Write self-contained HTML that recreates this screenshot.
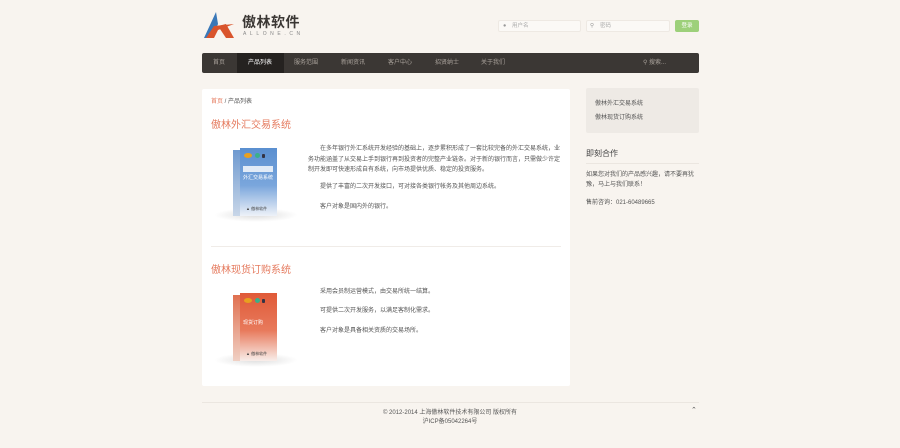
<!DOCTYPE html>
<html><head><meta charset="utf-8"><style>
*{margin:0;padding:0;box-sizing:border-box}
body{width:900px;height:448px;background:#f8f4ef;font-family:"Liberation Sans","Noto Sans CJK SC",sans-serif;color:#555;position:relative;overflow:hidden}
.a{position:absolute}
.t{font-size:6px;line-height:10.5px;color:#555;white-space:nowrap}
.nav{left:202px;top:53px;width:497px;height:20px;background:#3b3734;border-radius:2px}
.nav span{position:absolute;top:0;line-height:20px;font-size:6px;color:#a9a29b}
.inp{height:12px;background:#fbf9f6;border:1px solid #eee9e3;border-radius:2px;font-size:5.5px;color:#aaa;line-height:10px;padding-left:13px}
.dot{position:absolute;width:5px;height:5px;border-radius:50%}
</style></head><body>
<svg class="a" style="left:204px;top:12px" width="36" height="26" viewBox="0 0 36 26">
<polygon points="12,0 0,26 8,26 14,12" fill="#3a78b8"/>
<polygon points="2,26 10,14 30,12 14,18 10,26" fill="#d9542c"/>
<polygon points="14,14 22,26 30,26 22,12" fill="#d9542c"/>
</svg>
<div class="a" style="left:242px;top:14px;font-size:14px;font-weight:bold;color:#3b3734;letter-spacing:0.5px;line-height:17px">傲林软件</div>
<div class="a" style="left:243px;top:31px;font-size:5px;color:#888;letter-spacing:3.6px">ALLONE.CN</div>
<div class="a inp" style="left:498px;top:20px;width:83px">用户名<span class="a" style="left:4px;top:0;color:#999">●</span></div>
<div class="a inp" style="left:586px;top:20px;width:84px">密码<span class="a" style="left:3px;top:0;color:#999">⚲</span></div>
<div class="a" style="left:675px;top:20px;width:24px;height:12px;background:#9dd07a;border-radius:2px;color:#fff;font-size:5.5px;line-height:12px;text-align:center">登录</div>
<div class="a nav">
<div class="a" style="left:35px;top:0;width:47px;height:20px;background:#252220"></div>
<span style="left:11px">首页</span><span style="left:46px;color:#fff">产品列表</span><span style="left:92px">服务范围</span><span style="left:139px">新闻资讯</span><span style="left:186px">客户中心</span><span style="left:233px">招贤纳士</span><span style="left:279px">关于我们</span>
<span style="left:441px">⚲ 搜索...</span>
</div>
<div class="a" style="left:202px;top:89px;width:368px;height:297px;background:#fff;border-radius:2px"></div>
<div class="a t" style="left:211px;top:97px"><span style="color:#e57a5e">首页</span> / 产品列表</div>
<div class="a" style="left:211px;top:116px;font-size:10px;color:#e57a5e">傲林外汇交易系统</div>
<div class="a" style="left:214px;top:208px;width:84px;height:14px;background:radial-gradient(ellipse at center,#ddd 0%,rgba(255,255,255,0) 70%)"></div>
<div class="a" style="left:233px;top:150px;width:8px;height:66px;background:linear-gradient(#6f9ad0,#c8d6e8)"></div>
<div class="a" style="left:240px;top:148px;width:37px;height:68px;background:linear-gradient(#5a8fd0,#7aa6dc 55%,#eef2f8)">
<div class="dot" style="left:4px;top:5px;background:#e8a020;width:8px;height:5px"></div><div class="dot" style="left:15px;top:5px;background:#3ab08a"></div><div class="dot" style="left:22px;top:6px;background:#334;border-radius:1px;width:3px;height:4px"></div>
<div style="position:absolute;left:3px;top:18px;width:30px;height:6px;background:#fff;opacity:.8"></div>
<div style="position:absolute;left:3px;top:26px;font-size:5px;color:#fff">外汇交易系统</div>
<div style="position:absolute;left:6px;top:58px;font-size:4px;color:#444">▲ 傲林软件</div></div>
<div class="a t" style="left:308px;top:144px;white-space:normal;width:255px;text-indent:12px">在多年银行外汇系统开发经验的基础上，逐步累积形成了一套比较完备的外汇交易系统，业务功能涵盖了从交易上手到银行再到投资者的完整产业链条。对于新的银行而言，只需做少许定制开发即可快速形成自有系统，向市场提供优质、稳定的投资服务。</div>
<div class="a t" style="left:320px;top:182px">提供了丰富的二次开发接口，可对接各类银行帐务及其他周边系统。</div>
<div class="a t" style="left:320px;top:202px">客户对象是国内外的银行。</div>
<div class="a" style="left:211px;top:246px;width:350px;height:1px;background:#f0ece8"></div>
<div class="a" style="left:211px;top:261px;font-size:10px;color:#e57a5e">傲林现货订购系统</div>
<div class="a" style="left:214px;top:353px;width:84px;height:14px;background:radial-gradient(ellipse at center,#ddd 0%,rgba(255,255,255,0) 70%)"></div>
<div class="a" style="left:233px;top:295px;width:8px;height:66px;background:linear-gradient(#e07050,#f0d0c4)"></div>
<div class="a" style="left:240px;top:293px;width:37px;height:68px;background:linear-gradient(#e05a38,#e87a5c 55%,#f8eeea)">
<div class="dot" style="left:4px;top:5px;background:#e8a020;width:8px;height:5px"></div><div class="dot" style="left:15px;top:5px;background:#3ab08a"></div><div class="dot" style="left:22px;top:6px;background:#334;border-radius:1px;width:3px;height:4px"></div>
<div style="position:absolute;left:3px;top:26px;font-size:5px;color:#fff">现货订购</div>
<div style="position:absolute;left:6px;top:58px;font-size:4px;color:#444">▲ 傲林软件</div></div>
<div class="a t" style="left:320px;top:287px">采用会员制运营模式，由交易所统一结算。</div>
<div class="a t" style="left:320px;top:306px">可提供二次开发服务，以满足客制化需求。</div>
<div class="a t" style="left:320px;top:326px">客户对象是具备相关资质的交易场所。</div>
<div class="a" style="left:586px;top:88px;width:113px;height:45px;background:#eeeae5;border-radius:2px"></div>
<div class="a t" style="left:595px;top:98px;line-height:13.5px">傲林外汇交易系统<br>傲林现货订购系统</div>
<div class="a" style="left:586px;top:148px;font-size:8px;color:#444">即刻合作</div>
<div class="a" style="left:586px;top:163px;width:113px;height:1px;background:#ebe6e0"></div>
<div class="a t" style="left:586px;top:171px;line-height:9.5px;white-space:normal;width:113px">如果您对我们的产品感兴趣，请不要再犹豫，马上与我们联系！</div>
<div class="a t" style="left:586px;top:198px">售前咨询：021-60489665</div>
<div class="a" style="left:202px;top:402px;width:497px;height:1px;background:#ebe6e0"></div>
<div class="a t" style="left:0;width:900px;text-align:center;top:409px;line-height:9px">© 2012-2014 上海傲林软件技术有限公司 版权所有<br>沪ICP备05042264号</div>
<div class="a" style="left:691px;top:406px;font-size:7px;color:#555">⌃</div>
</body></html>
